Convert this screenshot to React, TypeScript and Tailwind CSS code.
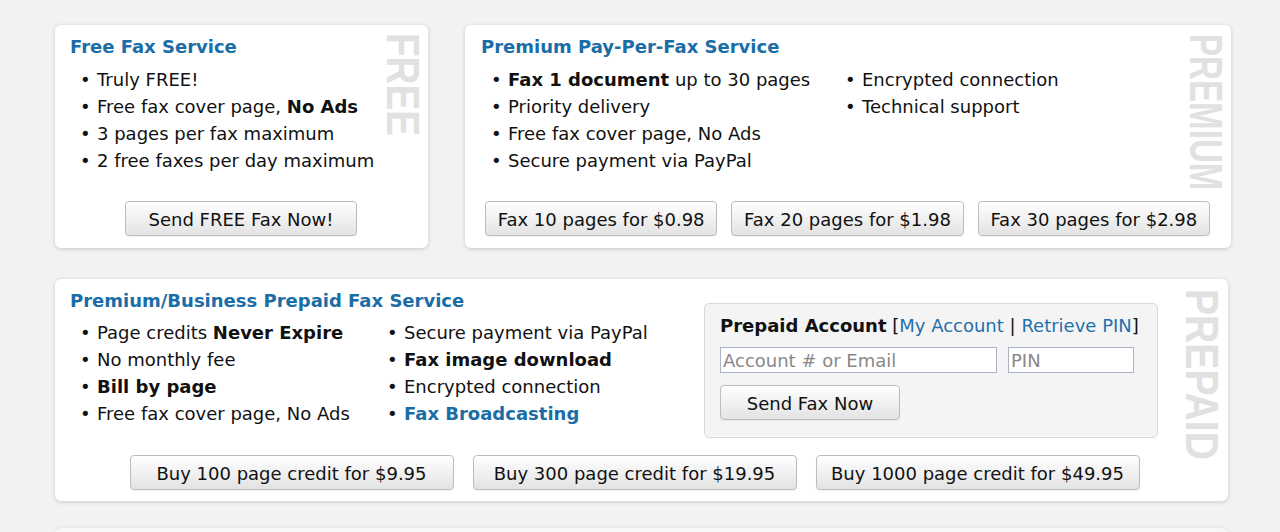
import type { ReactNode } from 'react';

const Li = ({ children }: { children: ReactNode }) => (
  <li className="flex whitespace-nowrap">
    <span className="w-[17px] shrink-0">•</span>
    <span>{children}</span>
  </li>
);

const Btn = ({ children, className = '' }: { children: ReactNode; className?: string }) => (
  <button
    className={`h-[35px] whitespace-nowrap rounded-[4px] border border-[#bdbdbd] bg-linear-to-b from-white to-[#e3e3e3] pt-[1px] text-[18px] text-[#111] shadow-[0_1px_1px_rgba(0,0,0,0.05)] ${className}`}
  >
    {children}
  </button>
);

const SideLabel = ({ text, className }: { text: string; className: string }) => (
  <span
    className={`pointer-events-none absolute origin-top select-none font-['Liberation_Sans',Arial,sans-serif] text-[46px] font-bold leading-none text-[#e1e1e1] [writing-mode:vertical-rl] ${className}`}
  >
    {text}
  </span>
);

const App = () => {
  return (
    <div className="h-[532px] w-[1280px] overflow-hidden bg-[#f2f2f2] pl-[55px] pt-[25px] font-['DejaVu_Sans',Verdana,sans-serif] text-[18px] text-[#111]">
      {/* Row 1 */}
      <div className="flex gap-[37px]">
        {/* Free */}
        <div className="relative flex h-[223px] w-[373px] flex-col rounded-[6px] bg-white pb-[12px] pl-[15px] pr-[16px] pt-[11px] shadow-[0_1px_4px_rgba(0,0,0,0.18)]">
          <h2 className="text-[18px] font-bold leading-[22px] text-[#1a6da6]">Free Fax Service</h2>
          <ul className="mt-[8px] pl-[10px] leading-[27px]">
            <Li>Truly FREE!</Li>
            <Li>
              Free fax cover page, <b>No Ads</b>
            </Li>
            <Li>3 pages per fax maximum</Li>
            <Li>2 free faxes per day maximum</Li>
          </ul>
          <div className="mt-auto flex justify-center">
            <Btn className="w-[232px]">Send FREE Fax Now!</Btn>
          </div>
          <SideLabel text="FREE" className="right-[2px] top-[8px] scale-y-[0.84]" />
        </div>

        {/* Premium */}
        <div className="relative flex h-[223px] w-[766px] flex-col rounded-[6px] bg-white pb-[12px] pl-[16px] pt-[11px] shadow-[0_1px_4px_rgba(0,0,0,0.18)]">
          <h2 className="text-[18px] font-bold leading-[22px] text-[#1a6da6]">Premium Pay-Per-Fax Service</h2>
          <div className="mt-[8px] grid grid-cols-[354px_auto] pl-[10px] leading-[27px]">
            <ul>
              <Li>
                <b>Fax 1 document</b> up to 30 pages
              </Li>
              <Li>Priority delivery</Li>
              <Li>Free fax cover page, No Ads</Li>
              <Li>Secure payment via PayPal</Li>
            </ul>
            <ul>
              <Li>Encrypted connection</Li>
              <Li>Technical support</Li>
            </ul>
          </div>
          <div className="mt-auto flex gap-[14px] pl-[4px] pr-[21px]">
            <Btn className="flex-1">Fax 10 pages for $0.98</Btn>
            <Btn className="flex-1">Fax 20 pages for $1.98</Btn>
            <Btn className="flex-1">Fax 30 pages for $2.98</Btn>
          </div>
          <SideLabel text="PREMIUM" className="right-[2px] top-[9px] scale-y-[0.72]" />
        </div>
      </div>

      {/* Prepaid */}
      <div className="relative mt-[31px] flex h-[222px] w-[1173px] flex-col rounded-[6px] bg-white pb-[11px] pl-[15px] pr-[29px] pt-[11px] shadow-[0_1px_4px_rgba(0,0,0,0.18)]">
        <div className="flex">
          <div className="w-[634px]">
            <h2 className="text-[18px] font-bold leading-[22px] text-[#1a6da6]">
              Premium/Business Prepaid Fax Service
            </h2>
            <div className="mt-[7px] grid grid-cols-[307px_auto] pl-[10px] leading-[27px]">
              <ul>
                <Li>
                  Page credits <b>Never Expire</b>
                </Li>
                <Li>No monthly fee</Li>
                <Li>
                  <b>Bill by page</b>
                </Li>
                <Li>Free fax cover page, No Ads</Li>
              </ul>
              <ul>
                <Li>Secure payment via PayPal</Li>
                <Li>
                  <b>Fax image download</b>
                </Li>
                <Li>Encrypted connection</Li>
                <Li>
                  <b className="text-[#1a6da6]">Fax Broadcasting</b>
                </Li>
              </ul>
            </div>
          </div>

          <div className="mt-[13px] flex h-[135px] w-[454px] flex-col rounded-[5px] border border-[#d9d9d9] bg-[#f4f4f4] pl-[15px] pt-[11px]">
            <div className="whitespace-nowrap leading-[22px]">
              <b>Prepaid Account</b> [<span className="text-[#1f70ad]">My Account</span> |{' '}
              <span className="text-[#1f70ad]">Retrieve PIN</span>]
            </div>
            <div className="mt-[10px] flex gap-[11px]">
              <input
                placeholder="Account # or Email"
                className="h-[26px] w-[277px] border border-[#a9b5c4] bg-white px-[2px] text-[18px] outline-none placeholder:text-[#888]"
              />
              <input
                placeholder="PIN"
                className="h-[26px] w-[126px] border border-[#a9b5c4] bg-white px-[2px] text-[18px] outline-none placeholder:text-[#888]"
              />
            </div>
            <div className="mt-[12px]">
              <Btn className="w-[180px]">Send Fax Now</Btn>
            </div>
          </div>
        </div>

        <div className="mt-auto flex justify-center gap-[19px]">
          <Btn className="w-[324px]">Buy 100 page credit for $9.95</Btn>
          <Btn className="w-[324px]">Buy 300 page credit for $19.95</Btn>
          <Btn className="w-[324px]">Buy 1000 page credit for $49.95</Btn>
        </div>
        <SideLabel text="PREPAID" className="right-[3px] top-[10px] scale-y-[0.85]" />
      </div>

      {/* next card, cut off */}
      <div className="mt-[27px] h-[20px] w-[1173px] rounded-t-[6px] bg-[#f7f7f7] shadow-[0_-1px_3px_rgba(0,0,0,0.06)]" />
    </div>
  );
};

export default App;
